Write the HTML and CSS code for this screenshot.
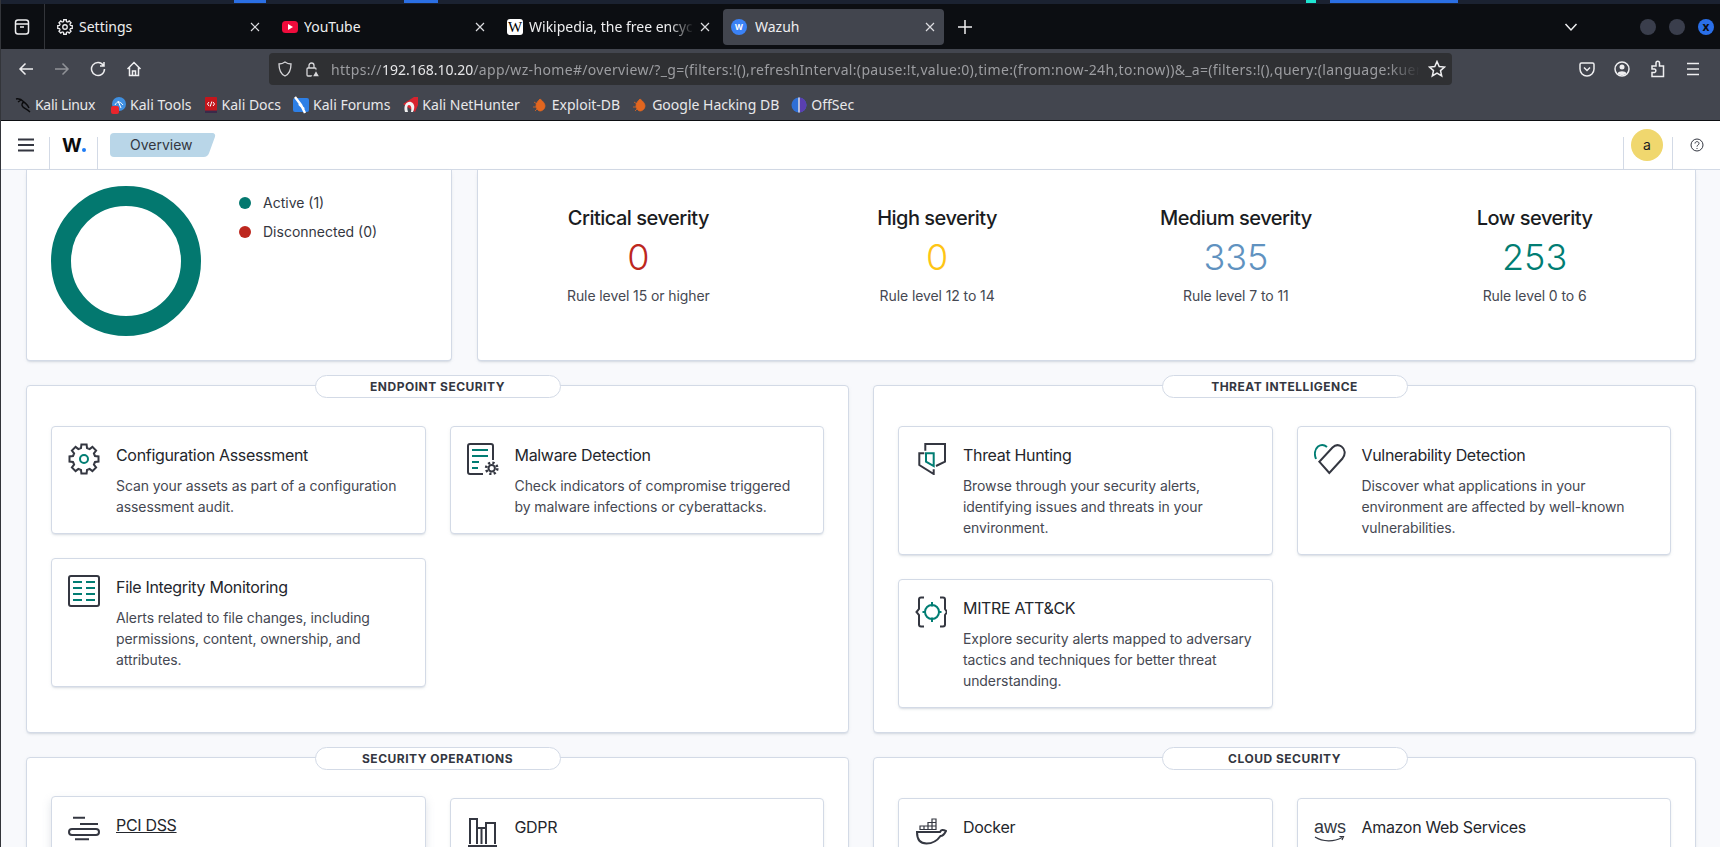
FILE: index.html
```html
<!DOCTYPE html>
<html lang="en">
<head>
    <meta charset="UTF-8">
    <meta name="viewport" content="width=device-width, initial-scale=1.0">
    <title>Wazuh</title>
    <link rel="stylesheet" href="styles.css">
</head>
<body>
    <svg class="defs" width="0" height="0">
        <defs>
            <g id="gear">
                <path id="tooth" d="M11.6 5.6 L13 5 L13.4 1.5 H18.6 L19 5 L20.4 5.6"/>
                <use href="#tooth" transform="rotate(45 16 16)"/>
                <use href="#tooth" transform="rotate(90 16 16)"/>
                <use href="#tooth" transform="rotate(135 16 16)"/>
                <use href="#tooth" transform="rotate(180 16 16)"/>
                <use href="#tooth" transform="rotate(225 16 16)"/>
                <use href="#tooth" transform="rotate(270 16 16)"/>
                <use href="#tooth" transform="rotate(315 16 16)"/>
            </g>
            <path id="close-x" d="M1 1 L9 9 M9 1 L1 9"/>
            <path id="bug" d="M8 2 C11 4 13 7 13 9 C13 12 10 14 8 14 C6 14 4 11 4 9 C4 6 6 4 8 2 Z M2 5 L5 7 M1 10 L4 10 M3 14 L5 12"/>
        </defs>
    </svg>

    <!-- desktop panel behind the window -->
    <div class="desktop-strip">
        <span class="strip-mark mark-a"></span>
        <span class="strip-mark mark-b"></span>
        <span class="strip-mark mark-c"></span>
        <span class="strip-mark mark-d"></span>
    </div>

    <!-- browser -->
    <div class="tabbar">
        <div class="tab-view">
            <svg class="chrome-icon" width="16" height="18" viewBox="0 0 16 18"><rect x="1.5" y="2" width="13" height="14" rx="2.5"/><path d="M1.5 6 H14.5 M6 9 H10"/></svg>
        </div>
        <div class="tab">
            <svg class="chrome-icon" width="16" height="16" viewBox="0 0 32 32"><use href="#gear" stroke-width="2.6"/><circle cx="16" cy="16" r="4.5" stroke-width="2.6"/></svg>
            <span class="tab-title">Settings</span>
            <svg class="tab-close" width="10" height="10" viewBox="0 0 10 10"><use href="#close-x"/></svg>
        </div>
        <div class="tab">
            <svg width="16" height="16" viewBox="0 0 16 16"><rect y="2" width="16" height="12" rx="3.5" fill="#f00c3c"/><path d="M6 5 L11 8 L6 11 Z" fill="#fff"/></svg>
            <span class="tab-title">YouTube</span>
            <svg class="tab-close" width="10" height="10" viewBox="0 0 10 10"><use href="#close-x"/></svg>
        </div>
        <div class="tab">
            <span class="favicon-wiki">W</span>
            <span class="tab-title tab-fade">Wikipedia, the free encyclopedia</span>
            <svg class="tab-close" width="10" height="10" viewBox="0 0 10 10"><use href="#close-x"/></svg>
        </div>
        <div class="tab tab-active">
            <span class="favicon-wazuh">W</span>
            <span class="tab-title">Wazuh</span>
            <svg class="tab-close" width="10" height="10" viewBox="0 0 10 10"><use href="#close-x"/></svg>
        </div>
        <svg class="tab-new chrome-icon" width="14" height="14" viewBox="0 0 14 14"><path d="M7 0 V14 M0 7 H14"/></svg>
        <svg class="tab-list chrome-icon" width="14" height="14" viewBox="0 0 14 14"><path d="M1.5 4 L7 10 L12.5 4"/></svg>
        <div class="win-buttons">
            <span class="win-btn"></span>
            <span class="win-btn"></span>
            <span class="win-btn win-close">x</span>
        </div>
    </div>

    <div class="toolbar">
        <div class="navrow">
            <div class="nav-buttons">
                <button class="nav-btn"><svg class="chrome-icon" width="16" height="16" viewBox="0 0 16 16"><path d="M15 8 H2 M7.5 2.5 L2 8 L7.5 13.5"/></svg></button>
                <button class="nav-btn nav-disabled"><svg class="chrome-icon" width="16" height="16" viewBox="0 0 16 16"><path d="M1 8 H14 M8.5 2.5 L14 8 L8.5 13.5"/></svg></button>
                <button class="nav-btn"><svg class="chrome-icon" width="16" height="16" viewBox="0 0 16 16"><path d="M13.5 4.5 A6.5 6.5 0 1 0 14.5 8 M14 1 V5 H10"/></svg></button>
                <button class="nav-btn"><svg class="chrome-icon" width="16" height="16" viewBox="0 0 16 16"><path d="M1.5 8 L8 1.5 L14.5 8 M3.5 6.5 V14.5 H12.5 V6.5 M6.5 14.5 V10 H9.5 V14.5"/></svg></button>
            </div>
            <div class="urlbar">
                <svg class="url-icon" width="16" height="16" viewBox="0 0 16 16"><path d="M8 1 C10 2.5 12 3 14 3 C14 9 12.5 13 8 15 C3.5 13 2 9 2 3 C4 3 6 2.5 8 1 Z"/></svg>
                <svg class="url-icon" width="16" height="16" viewBox="0 0 16 16"><rect x="3" y="7" width="9" height="8" rx="1"/><path d="M5 7 V4.5 A2.5 2.5 0 0 1 10 4.5 V7"/><path class="url-warn" d="M12 9 L16 16 H8 Z"/></svg>
                <div class="url-text"><span>https://</span><span class="url-host">192.168.10.20</span><span>/app/wz-home#/overview/?_g=(filters:!(),refreshInterval:(pause:!t,value:0),time:(from:now-24h,to:now))&amp;_a=(filters:!(),query:(language:kuery,query:''))</span></div>
                <svg class="chrome-icon url-star" width="18" height="18" viewBox="0 0 18 18"><path d="M9 1.5 L11.2 6.5 L16.5 7 L12.5 10.6 L13.7 16 L9 13.2 L4.3 16 L5.5 10.6 L1.5 7 L6.8 6.5 Z"/></svg>
            </div>
            <div class="nav-right">
                <button class="nav-btn"><svg class="chrome-icon" width="16" height="16" viewBox="0 0 16 16"><path d="M2.5 2 H13.5 Q15 2 15 3.5 V8 A7 7 0 0 1 1 8 V3.5 Q1 2 2.5 2 Z M5 6.5 L8 9.5 L11 6.5"/></svg></button>
                <button class="nav-btn"><svg class="chrome-icon" width="16" height="16" viewBox="0 0 16 16"><circle cx="8" cy="8" r="7"/><circle class="solid" cx="8" cy="6" r="2.5"/><path class="solid" d="M3.5 12.5 C4.5 9.5 11.5 9.5 12.5 12.5 C10 14.5 6 14.5 3.5 12.5 Z"/></svg></button>
                <button class="nav-btn"><svg class="chrome-icon" width="16" height="18" viewBox="0 0 16 18"><path d="M2 6 H6 V3 A1.7 1.7 0 0 1 9.5 3 V6 H13.5 V16.5 H2 V12.5 H4.5 A1.8 1.8 0 0 0 4.5 9 H2 Z"/></svg></button>
                <button class="nav-btn"><svg class="chrome-icon" width="16" height="14" viewBox="0 0 16 14"><path d="M2 1.5 H14 M2 7 H14 M2 12.5 H14"/></svg></button>
            </div>
        </div>
        <div class="bookmarks">
            <div class="bookmark bm-kali">
                <svg class="bm-dragon" width="16" height="16" viewBox="0 0 16 16"><path d="M1 2 C5 1 7 3 9 5 C11 7 13 8 14 11 M9 5 C7 6 6 8 8 10 C10 12 12 12 15 15 M3 5 L6 3"/></svg>
                <span>Kali Linux</span>
            </div>
            <div class="bookmark">
                <svg width="16" height="18" viewBox="0 0 16 18"><circle cx="9" cy="8" r="7" fill="#3f8fe0"/><path d="M5 9 C7 5 10 5 13 9 M8 5 L11 12" stroke="#fff" fill="none"/><rect x="1" y="10" width="8" height="8" rx="2" fill="#e8252c"/></svg>
                <span>Kali Tools</span>
            </div>
            <div class="bookmark">
                <svg width="14" height="18" viewBox="0 0 14 18"><rect x="1" y="1" width="12" height="16" rx="1" fill="#c4161c"/><rect x="1" y="14.5" width="12" height="2.5" fill="#3a2a4a"/><path d="M5 6 L3.5 8 L5 10 M9 6 L10.5 8 L9 10 M7.8 5.5 L6.2 10.5" stroke="#fff" fill="none"/></svg>
                <span>Kali Docs</span>
            </div>
            <div class="bookmark">
                <svg width="16" height="18" viewBox="0 0 16 18"><rect y="2" width="16" height="14" rx="2" fill="#2d7fe6"/><path d="M2 1 L8 9 L12 17 M6 8 L11 13" stroke="#fff" stroke-width="2.4" fill="none"/></svg>
                <span>Kali Forums</span>
            </div>
            <div class="bookmark">
                <svg width="16" height="18" viewBox="0 0 16 18"><path d="M1 8 L12 1 H16 V9 L13 16 Z" fill="#d8232e"/><path d="M3 16 C1 9 5 5 9 6 C13 8 13 12 11 16 H9 C10 12 9 9 7 9 C5 9 5 12 6 16 Z" fill="#f2f2f2"/></svg>
                <span>Kali NetHunter</span>
            </div>
            <div class="bookmark">
                <svg class="bm-bug" width="16" height="16" viewBox="0 0 16 16"><use href="#bug"/></svg>
                <span>Exploit-DB</span>
            </div>
            <div class="bookmark">
                <svg class="bm-bug" width="16" height="16" viewBox="0 0 16 16"><use href="#bug"/></svg>
                <span>Google Hacking DB</span>
            </div>
            <div class="bookmark">
                <svg width="16" height="18" viewBox="0 0 16 18"><circle cx="8" cy="9" r="7.5" fill="#2f6fd6"/><path d="M8 1.5 A7.5 7.5 0 0 1 8 16.5 Z" fill="#5a3fb0"/><path d="M8 1.5 V16.5" stroke="#e8e8ea" stroke-width="1.4"/></svg>
                <span>OffSec</span>
            </div>
        </div>
    </div>

    <!-- wazuh app -->
    <header class="app-header">
        <div class="cell cell-menu">
            <svg class="hamburger" width="16" height="14" viewBox="0 0 16 14"><path d="M0 1.5 H16 M0 7 H16 M0 12.5 H16"/></svg>
        </div>
        <div class="cell cell-logo">
            <span class="logo-w">W</span><span class="logo-dot"></span>
        </div>
        <div class="crumb">Overview</div>
        <div class="cell cell-avatar">
            <span class="avatar">a</span>
        </div>
        <div class="cell-help">
            <svg class="help" width="14" height="14" viewBox="0 0 14 14"><circle cx="7" cy="7" r="6"/><path d="M5 5.5 C5 3 9 3 9 5.5 C9 7 7 7 7 8.6 M7 10 V11"/></svg>
        </div>
    </header>

    <main class="page">
        <div class="top-row">
            <section class="panel panel-agents">
                <div class="donut"></div>
                <ul class="legend">
                    <li><span class="dot dot-green"></span>Active (1)</li>
                    <li><span class="dot dot-red"></span>Disconnected (0)</li>
                </ul>
            </section>
            <section class="panel panel-stats">
                <div class="stat">
                    <div class="stat-title">Critical severity</div>
                    <div class="stat-value val-red">0</div>
                    <div class="stat-desc">Rule level 15 or higher</div>
                </div>
                <div class="stat">
                    <div class="stat-title">High severity</div>
                    <div class="stat-value val-yellow">0</div>
                    <div class="stat-desc">Rule level 12 to 14</div>
                </div>
                <div class="stat">
                    <div class="stat-title">Medium severity</div>
                    <div class="stat-value val-blue">335</div>
                    <div class="stat-desc">Rule level 7 to 11</div>
                </div>
                <div class="stat">
                    <div class="stat-title">Low severity</div>
                    <div class="stat-value val-green">253</div>
                    <div class="stat-desc">Rule level 0 to 6</div>
                </div>
            </section>
        </div>

        <div class="groups">
            <section class="group">
                <div class="group-label">Endpoint security</div>
                <div class="card">
                    <svg class="card-icon" width="32" height="32" viewBox="0 0 32 32"><use class="dark" href="#gear"/><circle class="teal" cx="16" cy="16" r="4"/></svg>
                    <div class="card-body">
                        <div class="card-title">Configuration Assessment</div>
                        <p class="card-text">Scan your assets as part of a configuration assessment audit.</p>
                    </div>
                </div>
                <div class="card">
                    <svg class="card-icon" width="32" height="32" viewBox="0 0 32 32"><path class="dark" d="M16 31 H3 Q1 31 1 29 V3 Q1 1 3 1 H24 Q26 1 26 3 V17"/><path class="teal" d="M5 7 H21 M5 13 H21 M5 19 H12 M5 25 H11"/><circle class="dark" cx="24.7" cy="25.3" r="3.2" stroke-width="2.6"/><circle class="dark gear-teeth" cx="24.7" cy="25.3" r="5.6"/></svg>
                    <div class="card-body">
                        <div class="card-title">Malware Detection</div>
                        <p class="card-text">Check indicators of compromise triggered by malware infections or cyberattacks.</p>
                    </div>
                </div>
                <div class="card">
                    <svg class="card-icon" width="32" height="32" viewBox="0 0 32 32"><rect class="dark" x="1" y="1" width="30" height="30" rx="2"/><path class="teal" d="M5 7 H14 M18 7 H27 M5 13 H14 M18 13 H27 M5 19 H14 M18 19 H27 M5 25 H14 M18 25 H27"/></svg>
                    <div class="card-body">
                        <div class="card-title">File Integrity Monitoring</div>
                        <p class="card-text">Alerts related to file changes, including permissions, content, ownership, and attributes.</p>
                    </div>
                </div>
            </section>

            <section class="group">
                <div class="group-label">Threat intelligence</div>
                <div class="card">
                    <svg class="card-icon" width="32" height="32" viewBox="0 0 32 32"><path class="dark" d="M10.3 7.7 V1 H30 V18.7 L21 23 M9.3 10.3 H4.3 V22 L18.7 31 V26.3"/><path class="teal" d="M11 10.3 H18.7 V23 L11 18.7 Z"/></svg>
                    <div class="card-body">
                        <div class="card-title">Threat Hunting</div>
                        <p class="card-text">Browse through your security alerts, identifying issues and threats in your environment.</p>
                    </div>
                </div>
                <div class="card">
                    <svg class="card-icon" width="32" height="32" viewBox="0 0 32 32"><path class="teal" d="M2 16 C0 11 1 6 4 3.5 C7 1.5 10 1.5 13 4"/><path class="dark" d="M5.3 18.7 L15.3 30 L28.5 15.5 C32 11 31 6 27.5 3.5 C24.5 1.5 21 2 18.5 4.5 Z"/></svg>
                    <div class="card-body">
                        <div class="card-title">Vulnerability Detection</div>
                        <p class="card-text">Discover what applications in your environment are affected by well-known vulnerabilities.</p>
                    </div>
                </div>
                <div class="card">
                    <svg class="card-icon" width="32" height="32" viewBox="0 0 32 32"><path class="dark" d="M9 1.5 H6 Q4 1.5 4 3.5 V13 L1.5 16 L4 19 V28.5 Q4 30.5 6 30.5 H9 M25 1.5 H28 Q30 1.5 30 3.5 V13 L32 16 L30 19 V28.5 Q30 30.5 28 30.5 H25"/><circle class="teal" cx="17" cy="16" r="7"/><path class="teal" d="M17 6 V10.5 M17 21.5 V26 M7.5 16 H11 M23 16 H26.5"/></svg>
                    <div class="card-body">
                        <div class="card-title">MITRE ATT&amp;CK</div>
                        <p class="card-text">Explore security alerts mapped to adversary tactics and techniques for better threat understanding.</p>
                    </div>
                </div>
            </section>

            <section class="group">
                <div class="group-label">Security operations</div>
                <div class="card card-hover">
                    <svg class="card-icon" width="32" height="32" viewBox="0 0 32 32"><path class="dark" d="M5 4.7 H17 M12 11 H30 M7 26.3 H21"/><rect class="dark" x="1" y="16" width="30" height="6" rx="3"/></svg>
                    <div class="card-body">
                        <div class="card-title">PCI DSS</div>
                    </div>
                </div>
                <div class="card">
                    <svg class="card-icon" width="32" height="32" viewBox="0 0 32 32"><path class="dark" d="M3 29 V4 H10 V29 M10 13 H19 M14.5 13 V29 M19 29 V8 H28 V29"/><path class="dark" d="M1 31 H30"/></svg>
                    <div class="card-body">
                        <div class="card-title">GDPR</div>
                    </div>
                </div>
            </section>

            <section class="group">
                <div class="group-label">Cloud security</div>
                <div class="card">
                    <svg class="card-icon" width="32" height="32" viewBox="0 0 32 32"><path class="dark" d="M2 17 H25 C26 14.5 28 14.5 31 16 C29 20 27 21 25.5 21 C22 26 17 28.5 11.5 28.5 C5 28.5 2 24 2 17 Z"/><path class="dark dark-thin" d="M5 14.5 H9 V11 H5 Z M9 14.5 H13 V11 H9 Z M13 14.5 H17 V11 H13 Z M17 14.5 H21 V11 H17 Z M13 11 H17 V7.5 H13 Z M17 11 H21 V7.5 H17 Z M17 7.5 H21 V4 H17 Z"/></svg>
                    <div class="card-body">
                        <div class="card-title">Docker</div>
                    </div>
                </div>
                <div class="card">
                    <svg class="card-icon" width="32" height="32" viewBox="0 0 32 32"><text class="aws-text" x="0" y="18">aws</text><path class="dark dark-thin" d="M1 22 C9 27 20 27 28 22.5 M25.5 21.5 L29.5 21.5 L28 25"/></svg>
                    <div class="card-body">
                        <div class="card-title">Amazon Web Services</div>
                    </div>
                </div>
            </section>
        </div>
    </main>
</body>
</html>
```

FILE: styles.css
```css
* {
    box-sizing: border-box;
}
html, body {
    height: 100%;
}
body {
    margin: 0;
    height: 847px;
    overflow: hidden;
    font-family: Inter, "Liberation Sans", sans-serif;
    background-color: #f8f9fc;
    color: #343741;
    border-left: 1px solid #33353a;
}
.defs {
    position: absolute;
}
svg {
    display: block;
    flex: none;
}

/* desktop panel */
.desktop-strip {
    display: flex;
    height: 4px;
    background-color: #1b2231;
}
.strip-mark {
    height: 3px;
    background-color: #2b6fe3;
}
.mark-a {
    width: 32px;
    margin-left: 233px;
}
.mark-b {
    width: 34px;
    margin-left: 138px;
}
.mark-c {
    width: 10px;
    margin-left: 868px;
    background-color: #1fe5d0;
}
.mark-d {
    width: 128px;
    margin-left: 14px;
}

/* tabs */
.tabbar {
    display: flex;
    align-items: center;
    height: 45px;
    background-color: #0c0e12;
    font-family: "Noto Sans", sans-serif;
    font-size: 14px;
    color: #eeeef0;
}
.tab-view {
    display: flex;
    align-items: center;
    justify-content: center;
    width: 44px;
    height: 45px;
    margin-right: 3px;
    border-right: 1px solid #33353a;
    padding-right: 2px;
    flex: none;
}
.chrome-icon {
    fill: none;
    stroke: #eeeef0;
    stroke-width: 1.5;
}
.chrome-icon .solid {
    fill: #eeeef0;
    stroke: none;
}
.tab {
    display: flex;
    align-items: center;
    gap: 6px;
    width: 225px;
    height: 36px;
    padding: 0 13px 0 9px;
    flex: none;
}
.tab-active {
    width: 221px;
    padding: 0 9px 0 8px;
    background-color: #42454e;
    border-radius: 4px;
}
.tab-title {
    flex: 1;
    white-space: nowrap;
    overflow: hidden;
}
.tab-fade {
    -webkit-mask-image: linear-gradient(to right, #000 85%, transparent);
    mask-image: linear-gradient(to right, #000 85%, transparent);
}
.tab-close {
    fill: none;
    stroke: #dcdce0;
    stroke-width: 1.2;
}
.favicon-wiki {
    width: 16px;
    height: 16px;
    background-color: #fff;
    color: #000;
    border-radius: 3px;
    font-family: "Liberation Serif", serif;
    font-size: 15px;
    line-height: 16px;
    text-align: center;
    flex: none;
}
.favicon-wazuh {
    width: 16px;
    height: 16px;
    background-color: #3b82f6;
    color: #fff;
    border-radius: 50%;
    font-family: Inter, sans-serif;
    font-size: 8px;
    font-weight: 700;
    line-height: 16px;
    text-align: center;
    margin-right: 2px;
    flex: none;
}
.tab-new {
    margin-left: 14px;
}
.tab-list {
    margin-left: 592px;
}
.win-buttons {
    display: flex;
    gap: 13px;
    margin-left: 62px;
}
.win-btn {
    width: 16px;
    height: 16px;
    border-radius: 50%;
    background-color: #3a3e4c;
    text-align: center;
    font-size: 12px;
    font-weight: 700;
    line-height: 15px;
    color: #0c0e12;
}
.win-close {
    background-color: #2a6fe8;
}

/* navigation and bookmarks */
.toolbar {
    height: 72px;
    background-color: #43464f;
    border-bottom: 1px solid #0c0e12;
    font-family: "Noto Sans", sans-serif;
    font-size: 14px;
    color: #e8e8ea;
}
.navrow {
    display: flex;
    align-items: center;
    height: 40px;
}
.nav-buttons {
    display: flex;
    width: 268px;
    padding-left: 7px;
    flex: none;
}
.nav-btn {
    display: flex;
    align-items: center;
    justify-content: center;
    width: 36px;
    height: 32px;
    padding: 0;
    border: none;
    background: none;
}
.nav-disabled {
    opacity: 0.45;
}
.urlbar {
    display: flex;
    align-items: center;
    width: 1183px;
    height: 32px;
    padding: 0 5px 0 8px;
    background-color: #2f3033;
    border-radius: 4px;
    flex: none;
}
.url-icon {
    fill: none;
    stroke: #d6d6d9;
    stroke-width: 1.3;
    margin-right: 11px;
}
.url-icon .url-warn {
    fill: #d6d6d9;
    stroke: #2f3033;
}
.url-text {
    flex: 1;
    min-width: 0;
    margin-right: 8px;
    white-space: nowrap;
    overflow: hidden;
    color: #9c9da1;
    letter-spacing: 0.33px;
    -webkit-mask-image: linear-gradient(to right, #000 97%, transparent);
    mask-image: linear-gradient(to right, #000 97%, transparent);
}
.url-host {
    color: #e6e6e8;
    letter-spacing: 0;
}
.url-star {
    margin-right: 1px;
}
.nav-right {
    display: flex;
    margin-left: 117px;
}
.nav-right .nav-btn {
    width: 35.5px;
}
.bookmarks {
    display: flex;
    align-items: center;
    gap: 12px;
    height: 31px;
    padding-left: 14px;
}
.bookmark {
    display: flex;
    align-items: center;
    gap: 4px;
}
.bm-kali {
    letter-spacing: -0.3px;
    margin-right: 3px;
}
.bm-dragon {
    fill: none;
    stroke: #0b0b0d;
    stroke-width: 1.4;
}
.bm-bug {
    fill: #e2661f;
    stroke: #e2661f;
    stroke-width: 0.8;
}

/* app header */
.app-header {
    display: flex;
    height: 49px;
    background-color: #fff;
    border-bottom: 1px solid #d3dae6;
    align-items: center;
}
.cell {
    position: relative;
    display: flex;
    align-items: center;
    height: 48px;
    flex: none;
}
.cell::after {
    content: "";
    position: absolute;
    right: 0;
    bottom: 0;
    width: 1px;
    height: 32px;
    background-color: #d3dae6;
}
.cell-menu {
    width: 49px;
    padding-left: 17px;
}
.hamburger {
    fill: none;
    stroke: #343741;
    stroke-width: 2;
}
.cell-logo {
    width: 48px;
    padding-left: 12px;
}
.logo-w {
    font-size: 19px;
    font-weight: 700;
    color: #0b0b0d;
    letter-spacing: -1px;
}
.logo-dot {
    width: 4px;
    height: 4px;
    margin: 10px 0 0 1px;
    border-radius: 50%;
    background-color: #1f7cf5;
}
.crumb {
    position: relative;
    width: 90px;
    height: 24px;
    margin-left: 12px;
    padding-left: 20px;
    background-color: #b9d6e8;
    border-radius: 4px 0 0 4px;
    font-size: 14px;
    line-height: 24px;
    color: #343741;
}
.crumb::after {
    content: "";
    position: absolute;
    top: 0;
    left: 85px;
    width: 17px;
    height: 24px;
    background-color: #b9d6e8;
    border-radius: 0 4px 4px 0;
    transform: skewX(-20deg);
}
.cell-avatar {
    width: 50px;
    margin-left: auto;
    padding-left: 8px;
}
.cell-avatar::before {
    content: "";
    position: absolute;
    left: 0;
    bottom: 0;
    width: 1px;
    height: 32px;
    background-color: #d3dae6;
}
.avatar {
    width: 32px;
    height: 32px;
    border-radius: 50%;
    background-color: #f0d76e;
    color: #1a1c21;
    font-size: 14px;
    line-height: 32px;
    text-align: center;
}
.cell-help {
    display: flex;
    justify-content: center;
    width: 47px;
    flex: none;
}
.help {
    fill: none;
    stroke: #343741;
    stroke-width: 1;
}

/* page */
.page {
    padding: 0 24px 0 25px;
}
.top-row {
    display: grid;
    grid-template-columns: 426px 1fr;
    gap: 25px;
    margin-bottom: 24px;
}
.panel {
    height: 191px;
    background-color: #fff;
    border: 1px solid #d3dae6;
    border-top: none;
    border-radius: 0 0 4px 4px;
    box-shadow: 0 2px 2px -1px rgba(152,162,179,0.3), 0 1px 5px -2px rgba(152,162,179,0.3);
}
.panel-agents {
    display: flex;
    align-items: flex-start;
    gap: 38px;
    padding: 16px 0 0 24px;
}
.donut {
    width: 150px;
    height: 150px;
    border: 20px solid #03786f;
    border-radius: 50%;
}
.legend {
    list-style-type: none;
    margin: 2px 0 0;
    padding: 0;
    font-size: 14px;
    color: #343741;
}
.legend li {
    display: flex;
    align-items: center;
    gap: 12px;
    height: 29px;
}
.dot {
    width: 12px;
    height: 12px;
    border-radius: 50%;
}
.dot-green {
    background-color: #03786f;
}
.dot-red {
    background-color: #bd271e;
}
.panel-stats {
    display: grid;
    grid-template-columns: repeat(4, 1fr);
    padding: 34px 11px 0;
    text-align: center;
}
.stat-title {
    font-size: 20px;
    font-weight: 500;
    line-height: 28px;
    letter-spacing: -0.5px;
    color: #1a1c21;
}
.stat-value {
    margin-top: 3px;
    font-size: 36px;
    font-weight: 300;
    line-height: 44px;
}
.stat-desc {
    margin-top: 6px;
    font-size: 14px;
    line-height: 21px;
    letter-spacing: -0.09px;
    color: #454852;
}
.val-red {
    color: #bd271e;
}
.val-yellow {
    color: #fec514;
}
.val-blue {
    color: #6092c0;
}
.val-green {
    color: #017d73;
}

.groups {
    display: grid;
    grid-template-columns: 1fr 1fr;
    gap: 24px;
}
.group {
    position: relative;
    display: grid;
    grid-template-columns: 1fr 1fr;
    gap: 24px;
    align-items: stretch;
    align-content: start;
    padding: 40px 24px 24px;
    background-color: #fff;
    border: 1px solid #d3dae6;
    border-radius: 4px;
    box-shadow: 0 2px 2px -1px rgba(152,162,179,0.3), 0 1px 5px -2px rgba(152,162,179,0.3);
}
.group-label {
    position: absolute;
    top: -11px;
    left: 50%;
    transform: translateX(-50%);
    width: 246px;
    height: 23px;
    background-color: #fff;
    border: 1px solid #d3dae6;
    border-radius: 12px;
    font-size: 12px;
    font-weight: 700;
    line-height: 21px;
    letter-spacing: 0.5px;
    text-align: center;
    text-transform: uppercase;
    color: #343741;
}
.card {
    display: flex;
    gap: 16px;
    padding: 16px;
    background-color: #fff;
    border: 1px solid #d3dae6;
    border-radius: 4px;
    box-shadow: 0 2px 2px -1px rgba(152,162,179,0.3), 0 1px 5px -2px rgba(152,162,179,0.3);
}
.card-hover {
    transform: translateY(-2px);
    box-shadow: 0 4px 8px rgba(152,162,179,0.3);
}
.card-hover .card-title {
    text-decoration: underline;
}
.card-icon {
    fill: none;
}
.card-icon .dark, .card-icon use.dark {
    fill: none;
    stroke: #343741;
    stroke-width: 2;
}
.card-icon .dark-thin {
    stroke-width: 1.2;
}
.card-icon .gear-teeth {
    stroke-width: 2.6;
    stroke-dasharray: 2.2 2.2;
}
.card-icon .teal {
    fill: none;
    stroke: #017d73;
    stroke-width: 2;
}
.aws-text {
    font-family: "Liberation Sans", sans-serif;
    font-size: 18px;
    fill: #343741;
}
.card-body {
    min-width: 0;
}
.card-title {
    font-size: 16px;
    font-weight: 400;
    line-height: 24px;
    letter-spacing: -0.32px;
    color: #24262c;
}
.card-text {
    margin: 8px 0 0;
    font-size: 14px;
    line-height: 21px;
    letter-spacing: -0.09px;
    color: #454852;
}
```
